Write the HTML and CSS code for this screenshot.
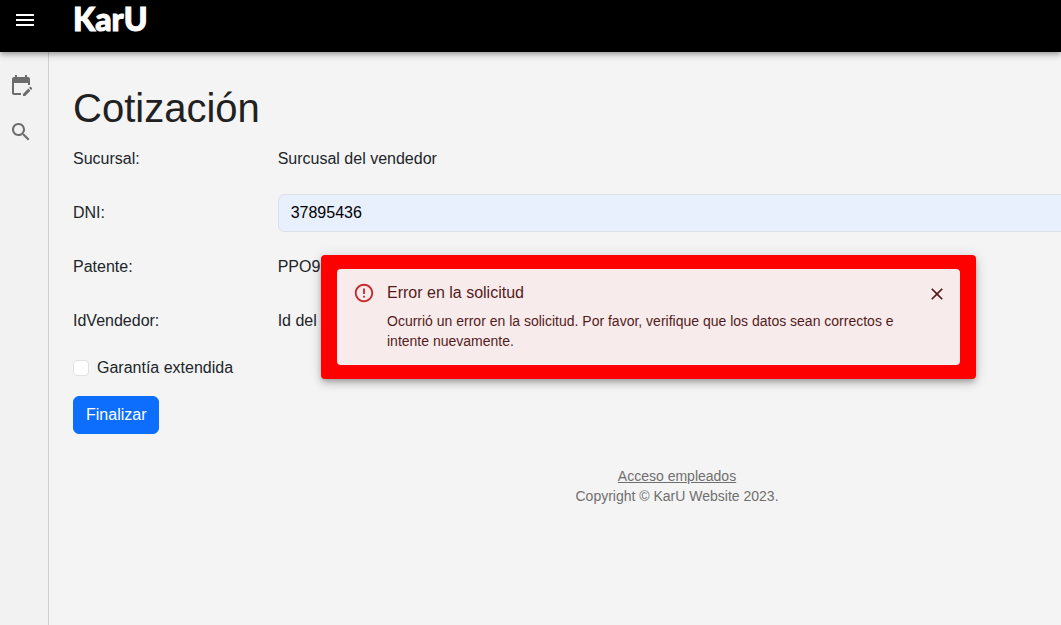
FILE: index.html
```html
<!DOCTYPE html>
<html lang="es">
<head>
<meta charset="utf-8">
<meta name="viewport" content="width=device-width, initial-scale=1">
<title>KarU - Cotización</title>
<link rel="stylesheet" href="styles.css">
</head>
<body>
<header class="topbar">
  <button class="icon-button menu-button" type="button" aria-label="Menú">
    <svg width="24" height="24" viewBox="0 0 24 24" fill="currentColor"><path d="M3 18h18v-2H3v2zm0-5h18v-2H3v2zm0-7v2h18V6H3z"/></svg>
  </button>
  <a class="brand" href="#">KarU</a>
</header>
<div class="layout">
  <nav class="sidebar" aria-label="Principal">
    <a href="#" aria-label="Cotización"><svg width="24" height="24" viewBox="0 0 24 24" fill="currentColor"><path d="M12 22H5c-1.110 0-2-.9-2-2L3.010 6c0-1.100.880-2 1.990-2h1V2h2v2h8V2h2v2h1c1.100 0 2 .9 2 2v6h-2v-2H5v10h7v2zm10.130-5.010.710-.710c.390-.390.390-1.020 0-1.410l-.710-.710c-.390-.390-1.020-.390-1.410 0l-.710.710 2.120 2.120zm-.710.710-5.300 5.300H14v-2.120l5.300-5.300 2.120 2.120z"/></svg></a>
    <a href="#" aria-label="Buscar"><svg width="24" height="24" viewBox="0 0 24 24" fill="currentColor"><path d="M15.500 14h-.79l-.28-.27C15.410 12.590 16 11.110 16 9.500 16 5.910 13.090 3 9.500 3S3 5.910 3 9.500 5.910 16 9.500 16c1.610 0 3.090-.59 4.230-1.570l.27.28v.79l5 4.990L20.490 19l-4.990-5zm-6 0C7.010 14 5 11.990 5 9.500S7.010 5 9.500 5 14 7.010 14 9.500 11.990 14 9.500 14z"/></svg></a>
  </nav>
  <div class="content">
    <main>
      <h1>Cotización</h1>
      <form class="quote">
        <div class="row"><span>Sucursal:</span><span>Surcusal del vendedor</span></div>
        <div class="row"><label for="dni">DNI:</label><input class="field" id="dni" type="text" value="37895436"></div>
        <div class="row"><span>Patente:</span><span>PPO9</span></div>
        <div class="row"><span>IdVendedor:</span><span>Id del vendedor</span></div>
        <label class="check"><input type="checkbox">Garantía extendida</label>
        <button class="submit" type="button">Finalizar</button>
      </form>
    </main>
    <footer class="footer">
      <a href="#">Acceso empleados</a>
      <span>Copyright © KarU Website 2023.</span>
    </footer>
  </div>
</div>
<div class="dialog" role="alertdialog" aria-labelledby="alert-title" aria-describedby="alert-text">
  <div class="alert">
    <svg class="alert-icon" width="22" height="22" viewBox="0 0 24 24" fill="currentColor"><path d="M11 15h2v2h-2zm0-8h2v6h-2zm.99-5C6.470 2 2 6.480 2 12s4.470 10 9.990 10C17.520 22 22 17.520 22 12S17.520 2 11.990 2zM12 20c-4.420 0-8-3.580-8-8s3.580-8 8-8 8 3.580 8 8-3.580 8-8 8z"/></svg>
    <div class="alert-body">
      <h2 id="alert-title">Error en la solicitud</h2>
      <p id="alert-text">Ocurrió un error en la solicitud. Por favor, verifique que los datos sean correctos e intente nuevamente.</p>
    </div>
    <button class="icon-button" type="button" aria-label="Cerrar">
      <svg width="20" height="20" viewBox="0 0 24 24" fill="currentColor"><path d="M19 6.410L17.590 5 12 10.590 6.410 5 5 6.410 10.590 12 5 17.590 6.410 19 12 13.410 17.590 19 19 17.590 13.410 12z"/></svg>
    </button>
  </div>
</div>
</body>
</html>
```
FILE: styles.css
```css
* {
  box-sizing: border-box;
}

body {
  margin: 0;
  min-height: 100vh;
  display: flex;
  flex-direction: column;
  overflow: hidden;
  background: #f4f4f4;
  color: #212529;
  font: 16px/24px "Liberation Sans", Arial, sans-serif;
}

h1,
h2,
p {
  margin: 0;
  font-weight: 400;
}

svg {
  display: block;
}

.icon-button {
  padding: 0;
  border: 0;
  background: none;
  color: inherit;
}

.topbar {
  position: relative;
  z-index: 1;
  display: flex;
  align-items: center;
  gap: 36px;
  padding: 0 13px 12px;
  background: #000;
  color: #fff;
  box-shadow: 0 2px 4px -1px rgba(0, 0, 0, 0.2), 0 4px 5px rgba(0, 0, 0, 0.14), 0 1px 10px rgba(0, 0, 0, 0.12);
}

.brand {
  padding-bottom: 2px;
  color: inherit;
  font: 900 32px/38px Lato, sans-serif;
  text-decoration: none;
  -webkit-text-stroke: 1px currentColor;
}

.layout {
  flex: 1;
  display: flex;
  width: 123vw;
}

.sidebar {
  flex: none;
  display: flex;
  flex-direction: column;
  gap: 23px;
  padding: 21px 15px 0 9px;
  border-right: 1px solid #d0d0d0;
  background: #f2f2f2;
  color: #6c6c6c;
}

.sidebar a {
  color: inherit;
}

.content {
  flex: 1;
  padding: 32px 24px;
}

h1 {
  margin-bottom: 8px;
  color: #212121;
  font-size: 40px;
  line-height: 48px;
}

.quote {
  display: flex;
  flex-direction: column;
  align-items: flex-start;
  gap: 16px;
}

.row {
  align-self: stretch;
  display: grid;
  grid-template-columns: 1fr 5fr;
  align-items: center;
  column-gap: 4px;
  min-height: 38px;
  padding-bottom: 1px;
}

.row:has(.field) {
  padding-bottom: 0;
}

.field {
  width: 100%;
  height: 38px;
  padding: 6px 12px;
  border: 1px solid #dee2e6;
  border-radius: 6px;
  background: #e8f0fe;
  color: #000;
  font: inherit;
}

.check {
  display: flex;
  align-items: center;
  gap: 8px;
}

.check input {
  appearance: none;
  width: 16px;
  height: 16px;
  margin: 0;
  border: 1px solid #dee2e6;
  border-radius: 4px;
  background: #fff;
}

.submit {
  padding: 6px 12px;
  border: 1px solid #0d6efd;
  border-radius: 6px;
  background: #0d6efd;
  color: #fff;
  font: inherit;
}

.footer {
  display: flex;
  flex-direction: column;
  align-items: center;
  margin-top: 32px;
  color: #6f6f6f;
  font-size: 14px;
  line-height: 20px;
}

.footer a {
  color: inherit;
}

.dialog {
  position: absolute;
  z-index: 2;
  top: 255px;
  left: 321px;
  width: 655px;
  padding: 14px 16px;
  border-radius: 4px;
  background: #f00;
  box-shadow: 0 3px 5px -1px rgba(0, 0, 0, 0.2), 0 5px 8px rgba(0, 0, 0, 0.14), 0 1px 14px rgba(0, 0, 0, 0.12);
}

.alert {
  display: flex;
  align-items: flex-start;
  gap: 12px;
  padding: 13px 13px 14px 16px;
  border-radius: 4px;
  background: #f8ebeb;
  color: #541b1d;
}

.alert-icon {
  flex: none;
  color: #c62828;
}

.alert-body {
  flex: 1;
}

.alert .icon-button {
  padding-top: 2px;
}

h2 {
  margin-bottom: 7px;
  font-size: 16px;
  line-height: 22px;
}

p {
  font-size: 14px;
  line-height: 20px;
}
```
